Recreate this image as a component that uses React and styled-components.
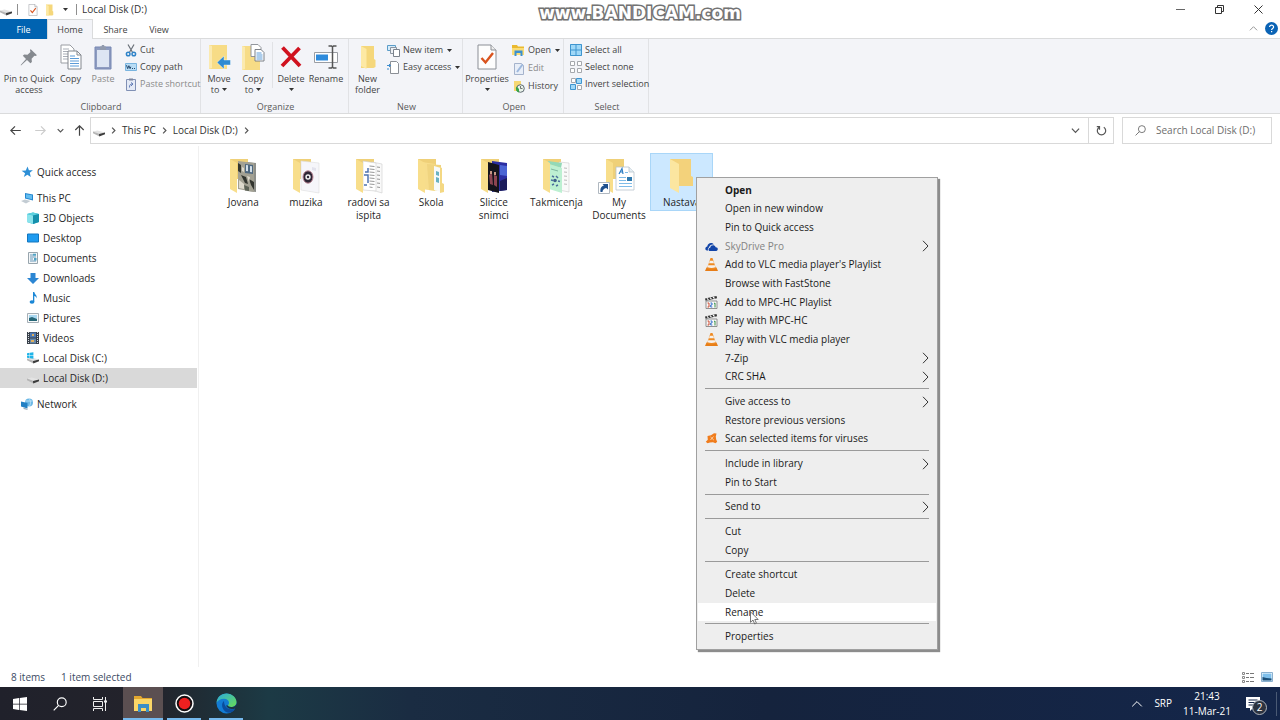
import React from "react";
import styled, { createGlobalStyle } from "styled-components";

const GlobalStyle = createGlobalStyle`
  * {
    box-sizing: border-box;
  }

  body {
    margin: 0;
    background: #fff;
    color: #1f1f1f;
    font-family: "Open Sans", "Noto Sans", sans-serif;
    font-size: 10px;
    line-height: 13px;
  }

  button,
  input {
    font: inherit;
    color: inherit;
    padding: 0;
    border: none;
    background: none;
  }

  svg {
    display: block;
    flex: none;
  }
`;

const Page = styled.div`
  position: relative;
  display: flex;
  flex-direction: column;
  min-height: 100vh;
`;

/* ---------- title bar ---------- */

const TitleBar = styled.header`
  display: flex;
  align-items: center;
  height: 19px;
  padding-right: 17px;
`;

const TitleDivider = styled.span`
  width: 1px;
  height: 11px;
  background: #8f8f8f;
`;

const QuickTools = styled.div`
  display: flex;
  align-items: center;
  gap: 6px;
  padding: 0 6px 0 5px;

  span {
    margin-right: 4px;
  }
`;

const Title = styled.h1`
  margin: 0 auto 0 5px;
  font-size: 10px;
  font-weight: 400;
  color: #333;
`;

const WindowButtons = styled.div`
  display: flex;
  gap: 29px;
`;

const IconButton = styled.button`
  display: flex;
  align-items: center;
  justify-content: center;
  min-width: 10px;
`;

const Watermark = styled.div`
  position: absolute;
  top: 4px;
  left: 0;
  right: 0;
  text-align: center;
  font-family: "DejaVu Sans", sans-serif;
  font-weight: 700;
  font-size: 17px;
  line-height: 19px;
  color: #fff;
  -webkit-text-stroke: 3px #6e6e6e;
  paint-order: stroke fill;
  text-shadow: 0 0 2px #8a8a8a;
  pointer-events: none;
`;

/* ---------- ribbon ---------- */

const Tabs = styled.nav`
  display: flex;
  height: 20px;
  border-bottom: 1px solid #dadbdc;
  font-size: 9px;
`;

const Tab = styled.button`
  width: ${(props) => props.$width};
  height: 20px;
  border: solid transparent;
  border-width: 1px 1px 0;
  color: #444;

  ${(props) => props.$file && "background: #0063b1; color: #fff;"}
  ${(props) =>
    props.$active && "background: #f3f4f8; border-color: #dadbdc;"}
`;

const TabTools = styled.div`
  display: flex;
  align-items: center;
  gap: 7px;
  margin-left: auto;
  padding-right: 2px;
`;

const Ribbon = styled.section`
  display: flex;
  height: 75px;
  background: #f3f4f8;
  border-bottom: 1px solid #dadbdc;
  font-size: 9px;
`;

const Group = styled.div`
  display: flex;
  flex-direction: column;
  justify-content: space-between;
  width: ${(props) => props.$width};
  padding: 3px 0 0 2px;
  border-right: 1px solid #e1e2e5;
`;

const GroupBody = styled.div`
  display: flex;
`;

const GroupLabel = styled.div`
  text-align: center;
  color: #5a5a5a;
`;

const BigButton = styled.button`
  display: flex;
  flex: none;
  flex-direction: column;
  align-items: center;
  width: ${(props) => props.$width};
  line-height: 11px;
  color: ${(props) => (props.disabled ? "#8a8a8a" : "#444")};
  white-space: nowrap;
`;

const BigIcon = styled.span`
  display: flex;
  align-items: center;
  height: 30px;
  margin-bottom: 1px;
`;

const LabelLine = styled.span`
  display: flex;
  align-items: center;
  justify-content: center;
  gap: 3px;
  min-height: 11px;
`;

const GroupDivider = styled.span`
  width: 1px;
  height: 46px;
  margin: 0 1px;
  background: #e1e2e5;
`;

const SmallList = styled.div`
  display: flex;
  flex-direction: column;
  gap: ${(props) => props.$gap || "3px"};
  padding: 1px 0 0 3px;
`;

const SmallButton = styled.button`
  display: flex;
  align-items: center;
  gap: 3px;
  line-height: 14px;
  color: ${(props) => (props.disabled ? "#8a8a8a" : "#444")};
  white-space: nowrap;

  svg:last-child {
    margin-left: 1px;
  }
`;

/* ---------- address row ---------- */

const AddressRow = styled.div`
  display: flex;
  align-items: center;
  padding: 3px 8px 2px 10px;
`;

const HistoryButtons = styled.div`
  display: flex;
  align-items: center;
  gap: 14px;
  padding-right: 5px;
`;

const HistoryPair = styled.div`
  display: flex;
  align-items: center;
  gap: 9px;
`;

const AddressBar = styled.nav`
  display: flex;
  align-items: center;
  flex: 1;
  height: 27px;
  border: 1px solid #d9d9d9;
  padding-left: 2px;
  gap: 5px;
`;

const Crumb = styled.a`
  color: #333;
  text-decoration: none;
`;

const AddressTools = styled.div`
  display: flex;
  align-self: stretch;
  margin-left: auto;

  button {
    width: 25px;
  }

  button + button {
    border-left: 1px solid #d9d9d9;
  }
`;

const SearchBox = styled.label`
  display: flex;
  align-items: center;
  gap: 10px;
  width: 150px;
  height: 27px;
  margin-left: 8px;
  padding-left: 12px;
  border: 1px solid #d9d9d9;
`;

const SearchInput = styled.input`
  width: 105px;
  outline: none;

  &::placeholder {
    color: #6d6d6d;
    opacity: 1;
  }
`;

/* ---------- main area ---------- */

const Main = styled.main`
  display: flex;
  flex: 1;
`;

const Sidebar = styled.nav`
  width: 199px;
  padding: 16px 1px 0 0;
  border-right: 1px solid #f0f0f0;
`;

const Tree = styled.ul`
  list-style: none;
  margin: 0 0 6px;
  padding: 0;
`;

const TreeItem = styled.a`
  display: flex;
  align-items: center;
  gap: 4px;
  height: 20px;
  padding-left: ${(props) => (props.$child ? "27px" : "21px")};
  background: ${(props) => (props.$selected ? "#d9d9d9" : "transparent")};
  color: #262626;
  text-decoration: none;
`;

const Files = styled.div`
  display: flex;
  align-items: flex-start;
  flex: 1;
  max-width: 514px;
  padding: 7px 0 0 13px;
`;

const File = styled.button`
  display: flex;
  flex-direction: column;
  align-items: center;
  flex: 1 1 0;
  min-width: 0;
  padding: 4px 0 1px;
  border: 1px solid ${(props) => (props.$selected ? "#a9d6f8" : "transparent")};
  background: ${(props) => (props.$selected ? "#cce8ff" : "transparent")};

  svg {
    margin-bottom: 2px;
  }
`;

const StatusBar = styled.footer`
  display: flex;
  align-items: center;
  gap: 16px;
  height: 20px;
  padding: 0 7px 0 11px;
  color: #3b4a63;
`;

const ViewButtons = styled.div`
  display: flex;
  gap: 7px;
  margin-left: auto;
`;

/* ---------- context menu ---------- */

const Menu = styled.div`
  position: absolute;
  top: 177px;
  left: 696px;
  display: flex;
  flex-direction: column;
  width: 242px;
  height: 473px;
  padding: 3px 1px;
  border: 1px solid #a0a0a0;
  background: #eeeeee;
  box-shadow: 2px 2px 1px rgba(0, 0, 0, 0.45);
`;

const MenuItem = styled.button`
  display: flex;
  align-items: center;
  flex: 1;
  padding: 0 7px;
  background: ${(props) => (props.$hover ? "#fff" : "transparent")};
  color: ${(props) => (props.disabled ? "#838383" : "#1a1a1a")};
  font-weight: ${(props) => (props.$bold ? 700 : 400)};
  text-align: left;
`;

const MenuIcon = styled.span`
  width: 20px;
`;

const MenuText = styled.span`
  flex: 1;
`;

const Separator = styled.hr`
  height: 1px;
  margin: 2px 7px 3px;
  border: none;
  background: #9a9a9a;
`;

const Cursor = styled.svg`
  position: absolute;
  top: 611px;
  left: 750px;
`;

/* ---------- taskbar ---------- */

const Taskbar = styled.footer`
  display: flex;
  align-items: stretch;
  height: 33px;
  background: linear-gradient(
    90deg,
    #20212b 0%,
    #23232b 12%,
    #1e3039 17%,
    #1c3a45 21%,
    #1a2c42 32%,
    #15233d 60%,
    #14264a 100%
  );
  color: #fff;
`;

const TaskButton = styled.button`
  display: flex;
  align-items: center;
  justify-content: center;
  width: 40px;
  border: solid transparent;
  border-width: 2px 0;
`;

const AppButton = styled(TaskButton)`
  width: ${(props) => (props.$active ? "40px" : "34px")};
  margin: 0 4px;
  border-bottom-color: #76b9ed;

  ${(props) =>
    props.$active &&
    "margin: 0 0 0 3px; background: #5b4f51; border-top-color: #5b4f51;"}
`;

const Tray = styled.div`
  display: flex;
  align-items: center;
  gap: 11px;
  margin-left: auto;
  padding-right: 3px;
`;

const Clock = styled.div`
  padding: 0 4px 0 0;
  text-align: center;
  line-height: 15px;
`;

const Notifications = styled.button`
  position: relative;
  width: 31px;
  height: 24px;
  border-right: 1px solid #4a5a74;
`;

const Badge = styled.span`
  position: absolute;
  top: 8px;
  left: 6px;
  width: 15px;
  height: 15px;
  border: 1px solid #b0b5bd;
  border-radius: 50%;
  background: #2c3340;
  color: #fff;
  line-height: 13px;
`;

/* ---------- icons ---------- */

const Caret = () => (
  <svg width="5" height="3" viewBox="0 0 5 3">
    <path d="M0 0h5L2.5 3z" fill="#333" />
  </svg>
);

const Chevron = ({ dir = "right", size = 7, color = "#555", width = 1.2 }) => {
  const paths = {
    right: "M3 1l4 4-4 4",
    down: "M1 3l4 4 4-4",
    up: "M1 7l4-4 4 4",
  };
  return (
    <svg width={size} height={size} viewBox="0 0 10 10">
      <path
        d={paths[dir]}
        fill="none"
        stroke={color}
        strokeWidth={(width * 10) / size}
      />
    </svg>
  );
};

const DriveIcon = ({ windows }) => (
  <svg width="12" height="12" viewBox="0 0 12 12">
    <path d="M0 6.5l4.5-1L12 7.500 6 9.200z" fill="#e3e3e3" />
    <path d="M0 6.500l6 2.200v2.500L0 8.200z" fill="#b5b5b5" />
    <path d="M6 9l6-1.500v1.700l-5.800 2.200z" fill="#3c3c3c" />
    {windows && (
      <path
        d="M0 1.200L2.600.8v2.500H0zM3 .7L6.400.2v3.100H3zM0 3.700h2.600v2.500L0 5.800zM3 3.700h3.400v3L3 6.300z"
        fill="#20b4e8"
      />
    )}
  </svg>
);

const CheckPage = ({ w, h }) => (
  <svg width={w} height={h} viewBox="0 0 20 26">
    <path d="M1 1h13l5 5v19H1z" fill="#fdfdfd" stroke="#8b8f96" />
    <path d="M14 1v5h5" fill="#eee" stroke="#8b8f96" />
    <path d="M4.500 14l4 4.500L16 9" fill="none" stroke="#d9531e" strokeWidth="2.400" />
  </svg>
);

const FlatFolder = ({ w, h }) => (
  <svg width={w} height={h} viewBox="0 0 16 24">
    <path d="M1 1h13v13l1.500 1v7l-2 1H1z" fill="#f5d77b" />
    <path d="M1 1l5.500 3v20L1 21z" fill="#fde9a4" />
  </svg>
);

const PinIcon = () => (
  <svg width="18" height="18" viewBox="0 0 18 18">
    <path
      d="M10.500 1L17 7.200l-1.600.8-1-.3-2.800 3 .3 3.200-1.500 1.300L7 12 1 17.400.7 17 6 11 2.800 7.800l1.400-1.300 3.300.2 3-2.800-.5-1.400z"
      fill="#85898f"
    />
  </svg>
);

const CopyIcon = () => (
  <svg width="22" height="26" viewBox="0 0 22 26">
    <path d="M1 1h9l4 4v14H1z" fill="#fff" stroke="#9a9da3" />
    <path d="M3 5h6M3 7.500h8M3 10h8M3 12.500h8M3 15h6" stroke="#a9aeb7" />
    <path d="M8 7h9l4 4v14H8z" fill="#fff" stroke="#83878e" />
    <path d="M17 7v4h4" fill="none" stroke="#83878e" />
    <path d="M10 12h5M10 14.500h9M10 17h9M10 19.500h9M10 22h9" stroke="#5b9bd8" />
  </svg>
);

const PasteIcon = () => (
  <svg width="18" height="26" viewBox="0 0 18 26">
    <path d="M1 3h16v22H1z" fill="#8e9cc0" stroke="#7787b3" />
    <path d="M3 6h12v17H3z" fill="#dde5f3" />
    <path d="M6 2.500h1.400L8 1h2l.6 1.500H12V6H6z" fill="#929bae" />
  </svg>
);

const CutIcon = () => (
  <svg width="12" height="13" viewBox="0 0 12 13">
    <path d="M3 .5l4.600 8M9 .5l-4.600 8" stroke="#6a7179" strokeWidth="1.200" />
    <g fill="none" stroke="#2f83c8" strokeWidth="1.500">
      <circle cx="3.200" cy="10" r="1.800" />
      <circle cx="8.800" cy="10" r="1.800" />
    </g>
  </svg>
);

const CopyPathIcon = () => (
  <svg width="12" height="12" viewBox="0 0 12 12">
    <path d="M.5 2.500h11v7H.5z" fill="#b8dcf5" stroke="#79b4df" />
    <path d="M1.500 4.200l1.200 3.500 1.200-3 1.200 3 .7-2" fill="none" stroke="#274b70" />
    <path d="M7 7.500h1M9 7.500h1" stroke="#274b70" />
  </svg>
);

const PasteShortcutIcon = () => (
  <svg width="12" height="13" viewBox="0 0 12 13">
    <path d="M1.500 1.500h9v11h-9z" fill="#e4eaf6" stroke="#8090b5" />
    <path d="M4 .5h4v2H4z" fill="#7d879e" />
    <path d="M4.500 9.500c0-3 1-3.500 3-3.500M6 4.500L8 6 6 8" fill="none" stroke="#5f7ab5" />
  </svg>
);

const MoveToIcon = () => (
  <svg width="24" height="26" viewBox="0 0 24 26">
    <path d="M2 1h18v24H2z" fill="#f7dc86" />
    <path d="M2 1l3 1v22l-3 1z" fill="#fbeab0" />
    <path d="M10 18.500L17 12v4h6.500v5H17v4z" fill="#2f8bd2" stroke="#fff" strokeWidth=".4" />
  </svg>
);

const CopyToIcon = () => (
  <svg width="24" height="27" viewBox="0 0 24 27">
    <path d="M1 2h18v24H1z" fill="#f7dc86" />
    <path d="M1 2l3 1v22l-3 1z" fill="#fbeab0" />
    <path d="M10 .5h7l3 3v9H10z" fill="#fff" stroke="#92969d" />
    <path d="M14 5.500h6l3 3V17h-9z" fill="#fff" stroke="#7d8188" />
    <path d="M15.500 9h5M15.500 11h6M15.500 13h6M15.500 15h6" stroke="#5b9bd8" />
  </svg>
);

const DeleteIcon = () => (
  <svg width="22" height="22" viewBox="0 0 22 22">
    <path d="M2.500 1.500L20 20M19.500 2L2 20" stroke="#d0121f" strokeWidth="3.800" />
  </svg>
);

const RenameIcon = () => (
  <svg width="25" height="24" viewBox="0 0 25 24">
    <path d="M.5 7.500h23v10H.5z" fill="#fff" stroke="#9a9da3" />
    <path d="M2 9.500h12v6H2z" fill="#2e8bdc" />
    <path d="M14.500 1h3l1 1 1-1h3M14.500 23h3l1-1 1 1h3M18.500 2v20" fill="none" stroke="#555" strokeWidth="1.500" />
  </svg>
);

const NewItemIcon = () => (
  <svg width="13" height="13" viewBox="0 0 13 13">
    <path d="M.5 1.500h8v5h-8z" fill="#d6ecfb" stroke="#5b9cc8" />
    <path d="M3.500 3.500h6v6h-6z" fill="#eef1f5" stroke="#8b95a1" />
    <path d="M6.500 5.500h6v7h-6z" fill="#fff" stroke="#7b828c" />
  </svg>
);

const EasyAccessIcon = () => (
  <svg width="13" height="13" viewBox="0 0 13 13">
    <path d="M3.500.5h6l2 2v10h-8z" fill="#fff" stroke="#8b8f96" />
    <path d="M0 4.500h4M2.500 3v3M0 8h2" stroke="#3e8ecf" />
  </svg>
);

const OpenIcon = () => (
  <svg width="13" height="12" viewBox="0 0 13 12">
    <path d="M0 1h5l1 1.500h6V11H0z" fill="#eab92e" />
    <path d="M0 4h12v7H0z" fill="#fadc74" />
    <path d="M2.500 6.500h8V12H8.500V9h-4v3h-2z" fill="#3a8fd0" />
  </svg>
);

const EditIcon = () => (
  <svg width="12" height="13" viewBox="0 0 12 13">
    <path d="M1.500 1.500h7l2 2v9h-9z" fill="#e8eef8" stroke="#a5b3cc" />
    <path d="M4 10l5.500-7.500" stroke="#9db8dd" strokeWidth="2" />
  </svg>
);

const HistoryIcon = () => (
  <svg width="12" height="13" viewBox="0 0 12 13">
    <path d="M1 1h7v10H1z" fill="#f6d873" />
    <circle cx="7.500" cy="8.500" r="3.800" fill="#e9f3ea" stroke="#5f6b73" />
    <path d="M3.500 6.500a4 4 0 0 0 2.500 6V9z" fill="#37a34a" />
    <path d="M7.500 6v2.500h2" fill="none" stroke="#555" strokeWidth=".8" />
  </svg>
);

const selectCells = {
  all: (
    <>
      <path d="M0 0h12v12H0z" fill="#9fd8f8" />
      <path d="M.5.5h11v11H.5zM6 0v12M0 6h12" fill="none" stroke="#3f95cf" />
    </>
  ),
  none: (
    <path
      d="M.5.5h4v4h-4zM7.500.5h4v4h-4zM.5 7.500h4v4h-4zM7.500 7.500h4v4h-4z"
      fill="#fff"
      stroke="#a5a8ad"
    />
  ),
  invert: (
    <>
      <path d="M1.500.5h4v4h-4zM7.500 7.500h4v4h-4z" fill="#fff" stroke="#a5a8ad" />
      <path d="M6.500.5h5v5h-5zM.5 6.500h5v5h-5z" fill="#9fd8f8" stroke="#3f95cf" />
    </>
  ),
};

const SelectIcon = ({ kind }) => (
  <svg width="12" height="12" viewBox="0 0 12 12">
    {selectCells[kind]}
  </svg>
);

const ArrowIcon = ({ dir, color = "#444" }) => (
  <svg width="11" height="11" viewBox="0 0 11 11">
    <g
      transform={`rotate(${{ left: 0, right: 180, up: 90 }[dir]} 5.5 5.5)`}
      fill="none"
      stroke={color}
      strokeWidth="1.200"
    >
      <path d="M.8 5.500h10M5 1.300L.8 5.500 5 9.700" />
    </g>
  </svg>
);

const SearchIcon = ({ size, color }) => (
  <svg width={size} height={size} viewBox="0 0 12 12">
    <g fill="none" stroke={color}>
      <circle cx="7.500" cy="4.500" r="3.800" />
      <path d="M4.800 7.200L.6 11.400" />
    </g>
  </svg>
);

const treeIcons = {
  star: (
    <path
      d="M6.500.5l1.400 3.700 4 .1-3.100 2.500 1 4.200-3.400-2.300L2.800 11l1.300-3.800L.6 4.700l4.200-.3z"
      fill="#2d8fd6"
    />
  ),
  pc: (
    <>
      <path d="M4 1l8 1.500v6L4 6.500z" fill="#2486cf" />
      <path d="M5 2.200l6 1.100v3.900L5 5.800z" fill="#62bdf0" />
      <path d="M0 9l4-1.500L9.500 9 5 11.500z" fill="#c3ccd3" />
    </>
  ),
  cube: (
    <>
      <path d="M0 2l6-1.500 6 1.500v8l-6 2-6-2z" fill="#30b8cf" />
      <path d="M0 2l6 1.500V12l-6-2z" fill="#8ae3ec" />
      <path d="M0 2L6 .5 12 2 6 3.500z" fill="#5dd0de" />
      <path d="M6 3.500L12 2v8l-6 2z" fill="#1590ac" />
    </>
  ),
  desktop: (
    <path d="M.5 2h11v8H.5z" fill="#1e9bf0" stroke="#1276bf" />
  ),
  documents: (
    <>
      <path d="M1.500.5h9v11h-9z" fill="#f3f6f8" stroke="#98a5ad" />
      <path d="M3 3h3M3 5h6M3 7h3M3 9h6" stroke="#6b98b8" />
      <path d="M7 6h2.500v2.500H7zM6 1.800h3v2H6z" fill="#4fa3c4" />
    </>
  ),
  downloads: (
    <path d="M3.500 1h5v5H12l-6 6-6-6h3.500z" fill="#2c86d3" />
  ),
  music: (
    <>
      <path d="M6 0h1.300c.2 2.500 3.200 3 2.200 6.500-.2-1.600-1-2.300-2.200-2.500V10H6z" fill="#1b87d6" />
      <ellipse cx="5" cy="10" rx="2.400" ry="1.800" fill="#1b87d6" />
    </>
  ),
  pictures: (
    <>
      <path d="M.5 1.500h11v9H.5z" fill="#f7f9fa" stroke="#a5afb6" />
      <path d="M2 3h8v6H2z" fill="#a9d8f1" />
      <path d="M2 6l3-1 5 2v2H2z" fill="#276777" />
    </>
  ),
  videos: (
    <>
      <path d="M0 0h12v12H0z" fill="#38404a" />
      <path d="M3 .5h6v5H3z" fill="#4d79b3" />
      <path d="M3 6.500h6v5H3z" fill="#6587a8" />
      <path d="M5 2h2v2H5zM4 8h3v2H4z" fill="#dfaf5d" />
      <path d="M1.500 0v12M10.500 0v12" stroke="#d9dde0" strokeDasharray="1 1" />
    </>
  ),
  network: (
    <>
      <circle cx="8" cy="4.500" r="4" fill="#6cb8e6" />
      <path d="M8 .5c2 2 2 6 0 8M4.500 3h7" stroke="#d3edfa" strokeWidth=".7" fill="none" />
      <path d="M0 3.500l6.500 1.500v5.500L0 8.500z" fill="#2280c4" />
      <path d="M2.500 9.500l4 1.200V12l-4-1z" fill="#9aaebd" />
    </>
  ),
};

const TreeIcon = ({ name }) => {
  if (name === "drive" || name === "windowsDrive") {
    return <DriveIcon windows={name === "windowsDrive"} />;
  }
  return (
    <svg width="12" height="12" viewBox="0 0 12 12">
      {treeIcons[name]}
    </svg>
  );
};

/* what sticks out of each folder */
const folderContents = {
  photo: (
    <>
      <path d="M18 4l9 1v29l-9-1z" fill="#8d8f8a" />
      <path d="M9 3l16 2v29L9 31z" fill="#a3a193" />
      <path d="M16 6l8 1v9l-8-1z" fill="#4e6880" />
      <path d="M17 7l2 .3v6l-2-.3zM21 8l2 .2v6l-2-.3z" fill="#d3dfe8" />
      <path d="M9 5l3 2v8l-3-2zM12 17l5 2 2 7-3-1zM20 21l5 3v8l-3-5z" fill="#32352f" />
      <path d="M10 22l5 4v5l-5-1zM18 18l3 1-1 5zM13 9l2 1v4l-2-1z" fill="#dedacd" />
      <path d="M15 27l5 2v4l-4-.5z" fill="#5c6256" />
    </>
  ),
  disc: (
    <>
      <path d="M9 3l18 2v30l-18-3z" fill="#f6f6fa" stroke="#ddd" strokeWidth=".6" />
      <ellipse cx="16" cy="19" rx="5" ry="6.200" fill="#2e2636" stroke="#c08a98" />
      <circle cx="16" cy="19" r="2.700" fill="#eee" />
      <circle cx="16" cy="19" r="1.200" fill="#2e2636" />
      <path d="M20 9l4 1v3l-4-1z" fill="#e3e3ed" />
    </>
  ),
  papers: (
    <>
      <path d="M17 4l10 2v29l-10-3z" fill="#f9f9f9" stroke="#ccc" strokeWidth=".6" />
      <path d="M8 3l13 2v28L8 32z" fill="#fff" stroke="#ccc" strokeWidth=".6" />
      <path d="M10 14h3v-4M9 17h4v8M9 27h3" fill="none" stroke="#4f73b0" strokeWidth="1.500" />
      <path d="M14.500 8l5 .5M14.500 11l5 .5M14.500 14l5 .5M14.500 17l5 .5M14.500 20l5 .5M14.500 23l5 .5M14.500 26l5 .5M14.500 29l3 .5M22 9l3 .4M22 13l3 .4M22 17l3 .4M22 21l3 .4M22 25l3 .4M22 29l3 .5" stroke="#8c8c8c" strokeWidth=".9" />
    </>
  ),
  folders: (
    <>
      <path d="M5 4l13 2v27L5 31z" fill="#f7dd8c" />
      <path d="M10 6l14 1v26l-12-1z" fill="#f0d47f" />
      <path d="M17 8l7 2v24l-7-2z" fill="#f8fafa" />
      <path d="M19 13l3 1v4l-3-1zM19 19l3 1v5l-3-1z" fill="#6ab2c2" />
      <path d="M23 9l2 1v15l2 1v8l-4 1z" fill="#f4d883" />
    </>
  ),
  stage: (
    <>
      <path d="M12 3l15 2v27l-15 2z" fill="#2b2ea2" />
      <path d="M20 7l7 1v10l-7-1z" fill="#4b65d4" />
      <path d="M20 23l7-3v12l-7 1z" fill="#1b1c5a" />
      <path d="M8 4l11 3v28L8 32z" fill="#15141c" />
      <path d="M9 17l3-2 1 12-3-1zM14 17l3 1v11l-3-2z" fill="#8c4552" />
      <path d="M10 13h2v3h-2zM14 14h2v3h-2z" fill="#c59685" />
    </>
  ),
  notes: (
    <>
      <path d="M17 4l10 1v29l-10-2z" fill="#fafafa" stroke="#ccc" strokeWidth=".6" />
      <path d="M22 10l3 .3M22 14l3 .3M22 18l3 .3M22 22l3 .3M22 26l3 .3" stroke="#bbb" />
      <path d="M6 3l14 2-1 5-12-4z" fill="#93d9b8" />
      <path d="M7 6l13 4v25L7 31z" fill="#bdf0d2" />
      <path d="M9 11l7 2" stroke="#7fb8a0" />
      <path d="M10 18l2 1M14 18l2 2M9 22l2 .5M16 23l2 .5M10 27l2-1M14 28l2-1" stroke="#4b6e9d" strokeWidth="1.500" />
      <circle cx="13" cy="22.500" r="1.800" fill="#3d5f8a" />
    </>
  ),
  shortcut: (
    <>
      <path d="M11 9h13l5 5v18H11z" fill="#fff" stroke="#b9c4cd" strokeWidth=".8" />
      <path d="M24 9v5h5" fill="#e5eef4" stroke="#b9c4cd" strokeWidth=".8" />
      <path d="M14 16l3-5.500 1 5.500M15 14h3" fill="none" stroke="#2f7fc4" strokeWidth="1.200" />
      <path d="M20 14.500h3M14 19.500h7M14 22.500h7M14 25.500h13M14 28.500h13" stroke="#7fbce8" />
      <path d="M22 19h5v4h-5z" fill="#2d78ae" />
    </>
  ),
};

const FolderIcon = ({ kind }) => (
  <svg width="28" height="36" viewBox="0 0 28 36" overflow="visible">
    {kind === "empty" ? (
      <>
        <path d="M2 1h21v17l2 1v9H2z" fill="#f3d27b" />
        <path d="M2 1l9 5v29l-9-5z" fill="#fbe6a0" />
      </>
    ) : (
      <>
        <path d="M1 1h18v20H1z" fill="#efd078" />
        {folderContents[kind]}
        <path d="M1 1l7 4v30l-7-4z" fill="#f8de8b" />
      </>
    )}
    {kind === "shortcut" && (
      <>
        <path d="M-6.500 24.500h11v11h-11z" fill="#fff" stroke="#b0b8c0" />
        <path
          d="M-4.500 34c-.5-4 1-6 3.500-6.500L-2.500 26H3v5.500L1.200 30C-1 30.500-2.500 32-2.500 34z"
          fill="#1d4f8e"
        />
      </>
    )}
  </svg>
);

const menuIcons = {
  cloud: (
    <>
      <path
        d="M2 10.500C-.5 10 0 6.800 2.300 6.500 2.500 3 7 2 8.800 4.500 6 4 4.200 5.500 4 7.500 2.800 8 2.500 9.500 3.300 10.500z"
        fill="#1345a8"
      />
      <path
        d="M5 11c-2-.3-2-3 .2-3.200C5.500 4.800 9.800 4.500 10.600 7.200c2.700-.2 3 3.300.6 3.800z"
        fill="#1345a8"
      />
    </>
  ),
  vlc: (
    <>
      <path d="M1.500 9.500h10L13 13H0z" fill="#e77d17" />
      <path d="M5.500 0h2L11 10.500q-4.500 2-9 0z" fill="#ee8a22" />
      <path d="M4.800 2.800h3.400l.8 2.400H4zM3.200 7.200h6.600l.7 2.100q-4 1.500-8 0z" fill="#f6f1ec" />
    </>
  ),
  mpc: (
    <>
      <path d="M0 2.500L11.500 0l.6 2.300L.6 4.800z" fill="#333" />
      <path d="M2 2.300l1.500 1.500M5 1.600l1.500 1.500M8 1l1.500 1.500" stroke="#fff" strokeWidth="1.100" />
      <path d="M1 5h11v7.500H1z" fill="#f8f8f8" stroke="#777" strokeWidth=".8" />
      <path d="M2.500 7H4v4H2.500" fill="none" stroke="#cc4b31" />
      <path d="M5.500 7H7v2H5.700v2H7.300" fill="none" stroke="#346fcc" />
      <path d="M9 7.500l1-.5v4.500" fill="none" stroke="#389047" />
    </>
  ),
  avast: (
    <>
      <path
        d="M2.500 4L6 3.300 9 1.200l2.500.3-.7 3 .4 3 1 2.200-1.700 1.500-2.500-1-3 .2-2.500.8L.8 9.800l2-2z"
        fill="#f07c1c"
      />
      <path d="M5.500 5l3.300 3M8.500 4.500l-3 3.500" stroke="#fde0c0" strokeWidth=".8" />
    </>
  ),
};

/* ---------- data ---------- */

const thisPc = [
  ["cube", "3D Objects"],
  ["desktop", "Desktop"],
  ["documents", "Documents"],
  ["downloads", "Downloads"],
  ["music", "Music"],
  ["pictures", "Pictures"],
  ["videos", "Videos"],
  ["windowsDrive", "Local Disk (C:)"],
  ["drive", "Local Disk (D:)"],
];

const files = [
  ["photo", "Jovana"],
  ["disc", "muzika"],
  ["papers", "radovi sa ispita"],
  ["folders", "Skola"],
  ["stage", "Slicice snimci"],
  ["notes", "Takmicenja"],
  ["shortcut", "My Documents"],
  ["empty", "Nastava"],
];

const menu = [
  { text: "Open", bold: true },
  { text: "Open in new window" },
  { text: "Pin to Quick access" },
  { text: "SkyDrive Pro", icon: "cloud", sub: true, disabled: true },
  { text: "Add to VLC media player's Playlist", icon: "vlc" },
  { text: "Browse with FastStone" },
  { text: "Add to MPC-HC Playlist", icon: "mpc" },
  { text: "Play with MPC-HC", icon: "mpc" },
  { text: "Play with VLC media player", icon: "vlc" },
  { text: "7-Zip", sub: true },
  { text: "CRC SHA", sub: true },
  null,
  { text: "Give access to", sub: true },
  { text: "Restore previous versions" },
  { text: "Scan selected items for viruses", icon: "avast" },
  null,
  { text: "Include in library", sub: true },
  { text: "Pin to Start" },
  null,
  { text: "Send to", sub: true },
  null,
  { text: "Cut" },
  { text: "Copy" },
  null,
  { text: "Create shortcut" },
  { text: "Delete" },
  { text: "Rename", hover: true },
  null,
  { text: "Properties" },
];

/* ---------- parts ---------- */

const Big = ({ icon, lines, width, menu: hasMenu, disabled }) => (
  <BigButton $width={width} disabled={disabled}>
    <BigIcon>{icon}</BigIcon>
    {lines.map((line, i) => (
      <LabelLine key={i}>
        {line}
        {hasMenu && i === lines.length - 1 && <Caret />}
      </LabelLine>
    ))}
  </BigButton>
);

const Small = ({ icon, children, menu: hasMenu, disabled }) => (
  <SmallButton disabled={disabled}>
    {icon}
    {children}
    {hasMenu && <Caret />}
  </SmallButton>
);

const RibbonBar = () => (
  <Ribbon>
    <Group $width="201px">
      <GroupBody>
        <Big icon={<PinIcon />} lines={["Pin to Quick", "access"]} width="54px" />
        <Big icon={<CopyIcon />} lines={["Copy"]} width="29px" />
        <Big icon={<PasteIcon />} lines={["Paste"]} width="36px" disabled />
        <SmallList>
          <Small icon={<CutIcon />}>Cut</Small>
          <Small icon={<CopyPathIcon />}>Copy path</Small>
          <Small icon={<PasteShortcutIcon />} disabled>
            Paste shortcut
          </Small>
        </SmallList>
      </GroupBody>
      <GroupLabel>Clipboard</GroupLabel>
    </Group>
    <Group $width="148px">
      <GroupBody>
        <Big icon={<MoveToIcon />} lines={["Move", "to"]} width="32px" menu />
        <Big icon={<CopyToIcon />} lines={["Copy", "to"]} width="36px" menu />
        <GroupDivider />
        <Big icon={<DeleteIcon />} lines={["Delete", ""]} width="34px" menu />
        <Big icon={<RenameIcon />} lines={["Rename"]} width="36px" />
      </GroupBody>
      <GroupLabel>Organize</GroupLabel>
    </Group>
    <Group $width="114px">
      <GroupBody>
        <Big
          icon={<FlatFolder w={16} h={24} />}
          lines={["New", "folder"]}
          width="33px"
        />
        <SmallList>
          <Small icon={<NewItemIcon />} menu>
            New item
          </Small>
          <Small icon={<EasyAccessIcon />} menu>
            Easy access
          </Small>
        </SmallList>
      </GroupBody>
      <GroupLabel>New</GroupLabel>
    </Group>
    <Group $width="101px">
      <GroupBody>
        <Big
          icon={<CheckPage w={20} h={26} />}
          lines={["Properties", ""]}
          width="44px"
          menu
        />
        <SmallList $gap="4px">
          <Small icon={<OpenIcon />} menu>
            Open
          </Small>
          <Small icon={<EditIcon />} disabled>
            Edit
          </Small>
          <Small icon={<HistoryIcon />}>History</Small>
        </SmallList>
      </GroupBody>
      <GroupLabel>Open</GroupLabel>
    </Group>
    <Group $width="85px">
      <GroupBody>
        <SmallList>
          <Small icon={<SelectIcon kind="all" />}>Select all</Small>
          <Small icon={<SelectIcon kind="none" />}>Select none</Small>
          <Small icon={<SelectIcon kind="invert" />}>Invert selection</Small>
        </SmallList>
      </GroupBody>
      <GroupLabel>Select</GroupLabel>
    </Group>
  </Ribbon>
);

const ContextMenu = () => (
  <Menu role="menu">
    {menu.map((item, i) =>
      item ? (
        <MenuItem
          key={i}
          role="menuitem"
          disabled={item.disabled}
          $bold={item.bold}
          $hover={item.hover}
        >
          <MenuIcon>
            {item.icon && (
              <svg width="13" height="13" viewBox="0 0 13 13">
                {menuIcons[item.icon]}
              </svg>
            )}
          </MenuIcon>
          <MenuText>{item.text}</MenuText>
          {item.sub && (
            <svg width="7" height="12" viewBox="0 0 7 12">
              <path d="M1 .8L6 6l-5 5.200" fill="none" stroke="#333" />
            </svg>
          )}
        </MenuItem>
      ) : (
        <Separator key={i} />
      )
    )}
  </Menu>
);

const App = () => {
  return (
    <>
      <GlobalStyle />
      <Page>
        <TitleBar>
          <DriveIcon />
          <QuickTools>
            <TitleDivider />
            <IconButton aria-label="Properties">
              <CheckPage w={10} h={12} />
            </IconButton>
            <IconButton aria-label="New folder">
              <FlatFolder w={9} h={12} />
            </IconButton>
            <IconButton aria-label="Customize toolbar">
              <Caret />
            </IconButton>
          </QuickTools>
          <TitleDivider />
          <Title>Local Disk (D:)</Title>
          <WindowButtons>
            <IconButton aria-label="Minimize">
              <svg width="9" height="9" viewBox="0 0 9 9">
                <path d="M0 4.500h9" stroke="#666" />
              </svg>
            </IconButton>
            <IconButton aria-label="Restore">
              <svg width="9" height="9" viewBox="0 0 9 9">
                <path
                  d="M.5 2.500h6v6h-6zM2.500 2.500v-2h6v6h-2"
                  fill="none"
                  stroke="#333"
                />
              </svg>
            </IconButton>
            <IconButton aria-label="Close">
              <svg width="9" height="9" viewBox="0 0 9 9">
                <path d="M.5.5l8 8M8.500.5l-8 8" stroke="#333" />
              </svg>
            </IconButton>
          </WindowButtons>
        </TitleBar>
        <Watermark>www.BANDICAM.com</Watermark>

        <Tabs>
          <Tab $width="47px" $file>
            File
          </Tab>
          <Tab $width="46px" $active>
            Home
          </Tab>
          <Tab $width="45px">Share</Tab>
          <Tab $width="42px">View</Tab>
          <TabTools>
            <IconButton aria-label="Collapse ribbon">
              <Chevron dir="up" size={9} color="#999" width={1} />
            </IconButton>
            <IconButton aria-label="Help">
              <svg width="13" height="13" viewBox="0 0 13 13">
                <circle cx="6.500" cy="6.500" r="6.500" fill="#0a63b5" />
                <path
                  d="M4.600 5c0-2.500 4-2.500 4 0 0 1.400-2 1.500-2 3M6.600 9v1.300"
                  fill="none"
                  stroke="#fff"
                  strokeWidth="1.200"
                />
              </svg>
            </IconButton>
          </TabTools>
        </Tabs>
        <RibbonBar />

        <AddressRow>
          <HistoryButtons>
            <IconButton aria-label="Back">
              <ArrowIcon dir="left" />
            </IconButton>
            <HistoryPair>
              <IconButton aria-label="Forward" disabled>
                <ArrowIcon dir="right" color="#ccc" />
              </IconButton>
              <IconButton aria-label="Recent locations">
                <Chevron dir="down" />
              </IconButton>
              <IconButton aria-label="Up">
                <ArrowIcon dir="up" />
              </IconButton>
            </HistoryPair>
          </HistoryButtons>
          <AddressBar aria-label="Address">
            <DriveIcon />
            <Chevron />
            <Crumb href="#pc">This PC</Crumb>
            <Chevron />
            <Crumb href="#d">Local Disk (D:)</Crumb>
            <Chevron />
            <AddressTools>
              <IconButton aria-label="Previous locations">
                <Chevron dir="down" size={9} />
              </IconButton>
              <IconButton aria-label="Refresh">
                <svg width="11" height="11" viewBox="0 0 11 11">
                  <path
                    d="M7.800 2.200a4.200 4.200 0 1 1-4.600 0M3.500 4.800V1.700H.8"
                    fill="none"
                    stroke="#555"
                    strokeWidth="1.200"
                  />
                </svg>
              </IconButton>
            </AddressTools>
          </AddressBar>
          <SearchBox>
            <SearchIcon size={11} color="#6d6d6d" />
            <SearchInput
              aria-label="Search Local Disk (D:)"
              placeholder="Search Local Disk (D:)"
            />
          </SearchBox>
        </AddressRow>

        <Main>
          <Sidebar>
            <Tree>
              <li>
                <TreeItem href="#quick">
                  <TreeIcon name="star" />
                  Quick access
                </TreeItem>
              </li>
            </Tree>
            <Tree>
              <li>
                <TreeItem href="#pc">
                  <TreeIcon name="pc" />
                  This PC
                </TreeItem>
              </li>
              {thisPc.map(([icon, name]) => (
                <li key={name}>
                  <TreeItem href="#item" $child $selected={icon === "drive"}>
                    <TreeIcon name={icon} />
                    {name}
                  </TreeItem>
                </li>
              ))}
            </Tree>
            <Tree>
              <li>
                <TreeItem href="#network">
                  <TreeIcon name="network" />
                  Network
                </TreeItem>
              </li>
            </Tree>
          </Sidebar>
          <Files>
            {files.map(([kind, name]) => (
              <File key={name} $selected={name === "Nastava"}>
                <FolderIcon kind={kind} />
                {name}
              </File>
            ))}
          </Files>
        </Main>

        <StatusBar>
          <span>8 items</span>
          <span>1 item selected</span>
          <ViewButtons>
            <IconButton aria-label="Details view">
              <svg width="12" height="11" viewBox="0 0 12 11">
                <path
                  d="M.5.5h2v2h-2zM.5 4.500h2v2h-2zM.5 8.500h2v2h-2z"
                  fill="#fff"
                  stroke="#888"
                />
                <path
                  d="M4 1.500h3M8 1.500h4M4 5.500h3M8 5.500h4M4 9.500h3M8 9.500h4"
                  stroke="#777"
                />
              </svg>
            </IconButton>
            <IconButton aria-label="Large icons view">
              <svg width="12" height="10" viewBox="0 0 12 10">
                <path d="M.5.5h11v9H.5z" fill="#fff" stroke="#8ab0cf" />
                <path d="M1.500 1.500h9v7h-9z" fill="#7fc0ec" />
                <path d="M1.500 5l4 1 5 .5v2h-9z" fill="#1c4f78" />
              </svg>
            </IconButton>
          </ViewButtons>
        </StatusBar>

        <Taskbar>
          <TaskButton aria-label="Start">
            <svg width="14" height="14" viewBox="0 0 14 14">
              <path
                d="M0 2l6-.9v5.600H0zM6.700 1L14 0v6.700H6.700zM0 7.400h6V13l-6-.9zM6.700 7.400H14V14l-7.300-1z"
                fill="#fff"
              />
            </svg>
          </TaskButton>
          <TaskButton aria-label="Search">
            <SearchIcon size={14} color="#fff" />
          </TaskButton>
          <TaskButton aria-label="Task view">
            <svg width="15" height="14" viewBox="0 0 15 14">
              <g fill="none" stroke="#eee">
                <path d="M.5 0v2.500h9V0M.5 14v-2.500h9V14M.5 4.500h9v5h-9zM12.500 0v14" />
                <path d="M11 4.500h3" strokeWidth="2" />
              </g>
            </svg>
          </TaskButton>
          <AppButton $active aria-label="File Explorer">
            <svg width="20" height="18" viewBox="0 0 20 18">
              <path d="M1 1h7l1.500 2H19v13H1z" fill="#e3a72f" />
              <path d="M1 4h18v12H1z" fill="#fbd667" />
              <path d="M5 9h11v8h-3v-4H8v4H5z" fill="#3c8fc6" />
            </svg>
          </AppButton>
          <AppButton aria-label="Recorder">
            <svg width="19" height="19" viewBox="0 0 19 19">
              <circle cx="9.500" cy="9.500" r="8.500" fill="#160f12" stroke="#fff" strokeWidth="1.500" />
              <circle cx="9.500" cy="9.500" r="5.800" fill="#ef2020" />
            </svg>
          </AppButton>
          <AppButton aria-label="Edge">
            <svg width="21" height="21" viewBox="0 0 21 21">
              <defs>
                <linearGradient id="wave" x1="0" y1="0" x2="1" y2="1">
                  <stop offset="0" stopColor="#2aa9e0" />
                  <stop offset="1" stopColor="#6ade51" />
                </linearGradient>
              </defs>
              <circle cx="10.500" cy="10.500" r="10" fill="#137cd3" />
              <path
                d="M.5 10C1 4 5 .5 10.500.5c6 0 10 4.500 10 8.500 0 3-2.500 5-5.500 5-2 0-3-.8-3-1.500s1-1.200 1-2.800c0-2-2-4-5-4C4.500 5.700 1.500 7.500.5 10z"
                fill="url(#wave)"
              />
              <path
                d="M8 8c-3 2-2.500 8 2 11 4 2 8-.5 9.300-3.500-5 2.500-11.300-.5-11.300-7.500z"
                fill="#0b4c9c"
              />
              <path
                d="M12 12.500c0 .7 1 1.500 3 1.500 3 0 5.500-1.500 5.500-4v4.500l-1.200 1C14 17 11 15 10 12.500z"
                fill="#1c3545"
              />
            </svg>
          </AppButton>
          <Tray>
            <IconButton aria-label="Hidden icons">
              <Chevron dir="up" size={12} color="#fff" width={1} />
            </IconButton>
            <span>SRP</span>
            <Clock>
              <div>21:43</div>
              <div>11-Mar-21</div>
            </Clock>
            <Notifications aria-label="Notifications">
              <svg width="14" height="14" viewBox="0 0 14 14">
                <path d="M0 0h14v11H7l-3 3v-3H0z" fill="#fff" />
                <path d="M2.500 3h9M2.500 5.500h9M2.500 8h6" stroke="#14264a" />
              </svg>
              <Badge>2</Badge>
            </Notifications>
          </Tray>
        </Taskbar>

        <ContextMenu />
        <Cursor width="9" height="14" viewBox="0 0 9 14">
          <path
            d="M.5.8v10.500L3 9l1.700 4 1.700-.8L4.800 8.500h3.400z"
            fill="#fff"
            stroke="#555"
            strokeWidth=".8"
          />
        </Cursor>
      </Page>
    </>
  );
};

export default App;
